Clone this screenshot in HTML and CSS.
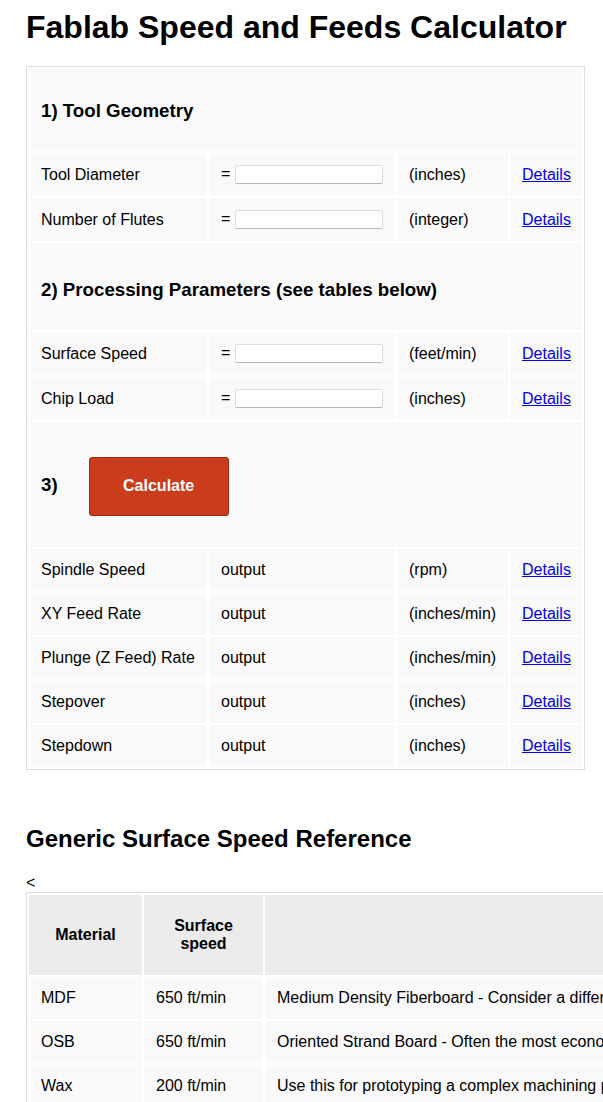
FILE: index.html
```html
<!DOCTYPE html>
<html>
<head>
<meta charset="utf-8">
<title>Fablab Speed and Feeds Calculator</title>
<link rel="stylesheet" href="styles.css">
</head>
<body>
<h1 class="title">Fablab Speed and Feeds Calculator</h1>
<table class="calc">
  <colgroup>
    <col class="c1"><col class="c2"><col class="c3"><col class="c4">
  </colgroup>
  <tr><td colspan="4" class="section s1"><h3>1) Tool Geometry</h3></td></tr>
  <tr class="in-row"><td>Tool Diameter</td><td>= <input class="field" type="text"></td><td>(inches)</td><td><a href="#">Details</a></td></tr>
  <tr class="in-row"><td>Number of Flutes</td><td>= <input class="field" type="text"></td><td>(integer)</td><td><a href="#">Details</a></td></tr>
  <tr><td colspan="4" class="section s2"><h3>2) Processing Parameters (see tables below)</h3></td></tr>
  <tr class="in-row"><td>Surface Speed</td><td>= <input class="field" type="text"></td><td>(feet/min)</td><td><a href="#">Details</a></td></tr>
  <tr class="in-row"><td>Chip Load</td><td>= <input class="field" type="text"></td><td>(inches)</td><td><a href="#">Details</a></td></tr>
  <tr><td colspan="4" class="section s3"><div class="calc-line"><h3>3)</h3><button class="calc-btn" type="button">Calculate</button></div></td></tr>
  <tr class="out-row"><td>Spindle Speed</td><td>output</td><td>(rpm)</td><td><a href="#">Details</a></td></tr>
  <tr class="out-row"><td>XY Feed Rate</td><td>output</td><td>(inches/min)</td><td><a href="#">Details</a></td></tr>
  <tr class="out-row"><td>Plunge (Z Feed) Rate</td><td>output</td><td>(inches/min)</td><td><a href="#">Details</a></td></tr>
  <tr class="out-row"><td>Stepover</td><td>output</td><td>(inches)</td><td><a href="#">Details</a></td></tr>
  <tr class="out-row"><td>Stepdown</td><td>output</td><td>(inches)</td><td><a href="#">Details</a></td></tr>
</table>

<h2 class="subtitle">Generic Surface Speed Reference</h2>
<div class="lt">&lt;</div>
<table class="ref">
  <colgroup>
    <col class="r1"><col class="r2"><col class="r3">
  </colgroup>
  <tr class="ref-head"><th>Material</th><th>Surface speed</th><th>Notes</th></tr>
  <tr class="ref-row"><td>MDF</td><td>650 ft/min</td><td>Medium Density Fiberboard - Consider a different material if you need a strong or water resistant part.</td></tr>
  <tr class="ref-row"><td>OSB</td><td>650 ft/min</td><td>Oriented Strand Board - Often the most economical sheet material for large furniture projects.</td></tr>
  <tr class="ref-row"><td>Wax</td><td>200 ft/min</td><td>Use this for prototyping a complex machining process before cutting the final material.</td></tr>
</table>
</body>
</html>
```

FILE: styles.css
```css
html, body {
  margin: 0;
  padding: 0;
}
body {
  padding: 0 0 40px 26px;
  font-family: "Liberation Sans", Arial, Helvetica, sans-serif;
  font-size: 16px;
  color: #000;
  background: #fff;
}
.title {
  font-size: 32px;
  line-height: 36px;
  font-weight: bold;
  margin: 9px 0 21px 0;
  white-space: nowrap;
}
.calc {
  border: 1px solid #dddddd;
  border-collapse: separate;
  border-spacing: 2px;
  table-layout: fixed;
  width: 559px;
}
.c1 { width: 178px; }
.c2 { width: 186px; }
.c3 { width: 111px; }
.c4 { width: 72px; }
.calc td {
  background: #f9f9f9;
  padding: 0 12px;
  vertical-align: middle;
  white-space: nowrap;
  line-height: 18px;
}
.in-row td { height: 43px; }
.out-row td { height: 42px; }
.section h3 {
  margin: 0;
  font-size: 18.72px;
  line-height: 22px;
  font-weight: bold;
}
.calc td.s1 { height: 82px; padding-top: 2px; box-sizing: border-box; }
.calc td.s2 { height: 87px; padding-top: 7px; box-sizing: border-box; }
.calc td.s3 { height: 125px; }
.calc-line {
  display: flex;
  align-items: center;
  gap: 31px;
}
.calc-btn {
  width: 140px;
  height: 59px;
  background: #c93c1c;
  border: 1px solid #9a2b14;
  border-radius: 3px;
  color: #fff;
  font-family: "Liberation Sans", Arial, sans-serif;
  font-size: 16px;
  font-weight: bold;
  padding: 0;
  margin-top: 3px;
}
.field {
  width: 148px;
  height: 19px;
  box-sizing: border-box;
  border: 1px solid #dcdcdc;
  border-bottom-color: #b8b8b8;
  border-radius: 2px;
  background: #fff;
  padding: 0 3px;
  vertical-align: middle;
  margin: 0;
  font-size: 13px;
}
a {
  color: #0000ee;
  text-decoration: underline;
}
.subtitle {
  font-size: 24px;
  line-height: 28px;
  font-weight: bold;
  margin: 55px 0 21px 0;
  white-space: nowrap;
}
.lt {
  line-height: 18px;
  height: 18px;
}
.ref {
  border: 1px solid #dddddd;
  border-collapse: separate;
  border-spacing: 2px;
  table-layout: fixed;
  width: 1000px;
}
.r1 { width: 113px; }
.r2 { width: 119px; }
.r3 { width: 760px; }
.ref th {
  background: #ebebeb;
  font-weight: bold;
  height: 80px;
  padding: 0 12px;
  text-align: center;
  vertical-align: middle;
  line-height: 18px;
}
.ref td {
  background: #f9f9f9;
  height: 42px;
  padding: 0 12px;
  vertical-align: middle;
  white-space: nowrap;
  line-height: 18px;
  overflow: hidden;
}
```
